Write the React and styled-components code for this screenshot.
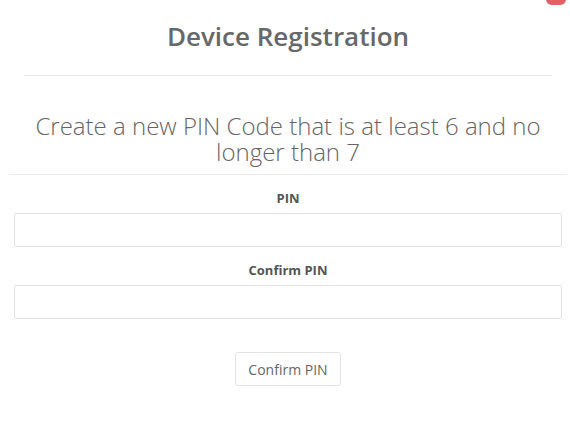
import React from "react";
import styled, { createGlobalStyle } from "styled-components";

const Global = createGlobalStyle`
  html, body { margin: 0; padding: 0; background: #fff; }
  body { font-family: "Open Sans", "Liberation Sans", sans-serif; }
  * { box-sizing: border-box; }
`;

const Modal = styled.div`
  position: relative;
  margin: 0 8px;
  width: 560px;
  background: #fff;
  padding-bottom: 40px;
`;

const CloseTab = styled.button`
  position: absolute;
  top: -14px;
  right: 2px;
  width: 20px;
  height: 19px;
  border: none;
  border-radius: 6px;
  background: #e35d63;
  padding: 0;
`;

const Header = styled.div`
  padding: 18px 16px 0;
  display: flex;
  flex-direction: column;
  align-items: center;
`;

const Title = styled.h2`
  margin: 0;
  font-size: 26px;
  font-weight: 600;
  line-height: 36px;
  color: #666869;
`;

const Rule = styled.hr`
  align-self: stretch;
  margin: ${(p) => p.$margin};
  border: none;
  border-top: 1px solid #eaeaea;
  height: 0;
`;

const Subtitle = styled.p`
  margin: 0;
  text-align: center;
  font-size: 24px;
  font-weight: 300;
  line-height: 26px;
  color: #666;
`;

const Form = styled.form`
  display: flex;
  flex-direction: column;
  align-items: center;
  padding: 0 6px;
`;

const Label = styled.label`
  font-size: 13px;
  font-weight: 700;
  color: #555;
  line-height: 17px;
  margin-bottom: 6px;
`;

const Input = styled.input`
  width: 100%;
  height: 34px;
  border: 1px solid #e2e2e2;
  border-radius: 2px;
  background: #fff;
  margin-bottom: ${(p) => p.$mb}px;
  outline: none;
`;

const Button = styled.button`
  font-family: "Open Sans", "Liberation Sans", sans-serif;
  font-size: 14px;
  color: #666;
  background: #fff;
  border: 1px solid #e3e3e3;
  border-radius: 3px;
  height: 34px;
  padding: 0 12px;
`;

export default function App() {
  return (
    <>
      <Global />
      <Modal>
        <CloseTab aria-label="Close" />
        <Header>
          <Title>Device Registration</Title>
          <Rule $margin="21px 0 37px" />
          <Subtitle>Create a new PIN Code that is at least 6 and no longer than 7</Subtitle>
        </Header>
        <Rule $margin="9px 1px 15px" />
        <Form onSubmit={(e) => e.preventDefault()}>
          <Label>PIN</Label>
          <Input type="password" $mb={15} />
          <Label>Confirm PIN</Label>
          <Input type="password" $mb={33} />
          <Button type="submit">Confirm PIN</Button>
        </Form>
      </Modal>
    </>
  );
}
